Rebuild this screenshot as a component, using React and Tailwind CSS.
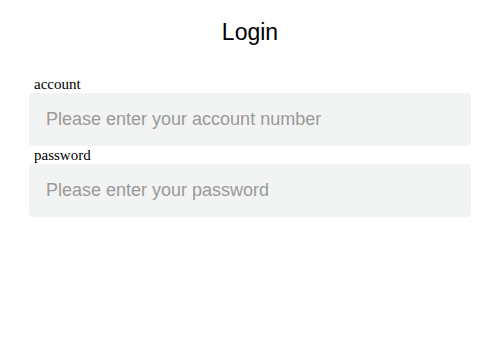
export default function App() {
  return (
    <div className="w-[500px] h-[348px] bg-white">
      <div className="pt-[19px] text-center text-[23px] leading-[26px] text-black font-['Liberation_Sans',Arial,sans-serif]">
        Login
      </div>
      <div className="mt-[30px] px-[29px] flex flex-col">
        <label className="pl-[5px] text-[15px] leading-[18px] text-black font-['Liberation_Serif','Times_New_Roman',serif]">
          account
        </label>
        <input
          className="h-[53px] w-full rounded-[4px] bg-[#f2f3f3] px-[17px] text-[18px] outline-none placeholder:text-[#9a9a9a] font-['Liberation_Sans',Arial,sans-serif]"
          placeholder="Please enter your account number"
        />
        <label className="pl-[5px] text-[15px] leading-[18px] text-black font-['Liberation_Serif','Times_New_Roman',serif]">
          password
        </label>
        <input
          type="password"
          className="h-[53px] w-full rounded-[4px] bg-[#f2f3f3] px-[17px] text-[18px] outline-none placeholder:text-[#9a9a9a] font-['Liberation_Sans',Arial,sans-serif]"
          placeholder="Please enter your password"
        />
      </div>
    </div>
  );
}
